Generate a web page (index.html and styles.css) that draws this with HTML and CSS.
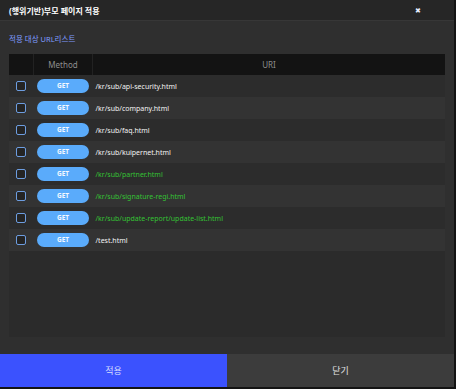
FILE: index.html
```html
<!DOCTYPE html>
<html lang="ko">
<head>
    <meta charset="UTF-8">
    <title>(행위기반)부모 페이지 적용</title>
    <link rel="stylesheet" href="styles.css">
</head>
<body>
    <div class="dialog">
        <div class="title-bar">
            <span class="title">(행위기반)부모 페이지 적용</span>
            <span class="close">&#x2716;</span>
        </div>

        <div class="dialog-body">
            <div class="list-label">적용 대상 URL리스트</div>
            <div class="table-wrap">
                <table class="url-table">
                    <thead>
                        <tr>
                            <th class="col-check"></th>
                            <th class="col-method">Method</th>
                            <th>URI</th>
                        </tr>
                    </thead>
                    <tbody>
                        <tr>
                            <td class="col-check"><span class="checkbox"></span></td>
                            <td class="col-method"><span class="method">GET</span></td>
                            <td class="uri">/kr/sub/api-security.html</td>
                        </tr>
                        <tr>
                            <td class="col-check"><span class="checkbox"></span></td>
                            <td class="col-method"><span class="method">GET</span></td>
                            <td class="uri">/kr/sub/company.html</td>
                        </tr>
                        <tr>
                            <td class="col-check"><span class="checkbox"></span></td>
                            <td class="col-method"><span class="method">GET</span></td>
                            <td class="uri">/kr/sub/faq.html</td>
                        </tr>
                        <tr>
                            <td class="col-check"><span class="checkbox"></span></td>
                            <td class="col-method"><span class="method">GET</span></td>
                            <td class="uri">/kr/sub/kuipernet.html</td>
                        </tr>
                        <tr>
                            <td class="col-check"><span class="checkbox"></span></td>
                            <td class="col-method"><span class="method">GET</span></td>
                            <td class="uri applied">/kr/sub/partner.html</td>
                        </tr>
                        <tr>
                            <td class="col-check"><span class="checkbox"></span></td>
                            <td class="col-method"><span class="method">GET</span></td>
                            <td class="uri applied">/kr/sub/signature-regi.html</td>
                        </tr>
                        <tr>
                            <td class="col-check"><span class="checkbox"></span></td>
                            <td class="col-method"><span class="method">GET</span></td>
                            <td class="uri applied">/kr/sub/update-report/update-list.html</td>
                        </tr>
                        <tr>
                            <td class="col-check"><span class="checkbox"></span></td>
                            <td class="col-method"><span class="method">GET</span></td>
                            <td class="uri">/test.html</td>
                        </tr>
                    </tbody>
                </table>
            </div>
        </div>

        <div class="footer">
            <button class="btn btn-apply">적용</button>
            <button class="btn btn-close">닫기</button>
        </div>
    </div>
</body>
</html>
```

FILE: styles.css
```css
body {
    margin: 0;
    background-color: #111;
    font-family: "Noto Sans", "Noto Sans CJK KR", sans-serif;
}

.dialog {
    width: 456px;
    height: 389px;
    box-sizing: border-box;
    background-color: #2f2f2f;
    border-right: 2px solid #141414;
    border-bottom: 2px solid #141414;
    display: flex;
    flex-direction: column;
}

.title-bar {
    height: 20px;
    background-color: #262626;
    border-bottom: 1px solid #373737;
    display: flex;
    align-items: center;
    justify-content: space-between;
    padding: 0 33px 0 9px;
}

.title {
    color: #fff;
    font-size: 8px;
    font-weight: bold;
}

.close {
    color: #e6ecff;
    font-size: 7px;
}

.dialog-body {
    flex: 1;
    padding: 12px 9px 17px 9px;
    display: flex;
    flex-direction: column;
}

.list-label {
    color: #7f9dff;
    font-size: 7.5px;
    line-height: 12px;
    margin-bottom: 9px;
}

.table-wrap {
    flex: 1;
    background-color: #2b2b2b;
}

.url-table {
    width: 100%;
    border-collapse: collapse;
    font-size: 7px;
}

.url-table th {
    height: 21px;
    padding: 0;
    background-color: #131313;
    color: #8e8e8e;
    font-weight: normal;
    font-size: 8px;
    border-left: 1px solid #222;
}

.url-table th:first-child {
    border-left: none;
}

.url-table td {
    height: 22px;
    padding: 0;
}

.url-table tbody tr:nth-child(odd) {
    background-color: #2c2c2c;
}

.url-table tbody tr:nth-child(even) {
    background-color: #333;
}

.col-check {
    width: 24px;
    text-align: center;
}

.col-method {
    width: 58px;
    text-align: center;
}

.checkbox {
    display: inline-block;
    width: 8px;
    height: 8px;
    border: 1.5px solid #6d9de0;
    border-radius: 2px;
    background-color: #242424;
    vertical-align: middle;
}

.method {
    display: inline-block;
    width: 52px;
    height: 14px;
    line-height: 14px;
    border-radius: 7px;
    background-color: #5aabfb;
    color: #f4f8ff;
    font-size: 6.5px;
    font-weight: bold;
    vertical-align: middle;
}

.uri {
    color: #f2f2f2;
    padding-left: 3px !important;
}

.uri.applied {
    color: #34c234;
}

.footer {
    height: 33px;
    display: flex;
}

.btn {
    flex: 1;
    border: none;
    margin: 0;
    font-family: "Noto Sans CJK KR", sans-serif;
    font-size: 9px;
    cursor: pointer;
}

.btn-apply {
    background-color: #3b52fe;
    color: #d6ddff;
}

.btn-close {
    background-color: #3c3c3c;
    color: #e0e0e0;
}
```
